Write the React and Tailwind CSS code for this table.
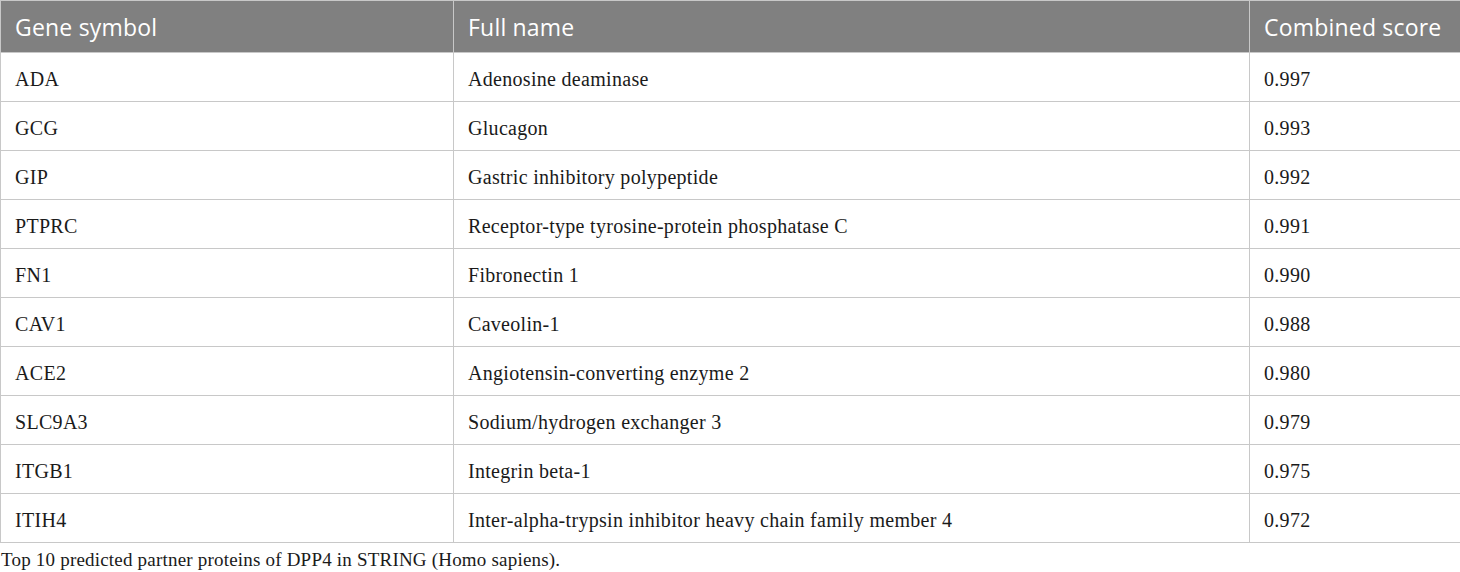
export default function App() {
  const rows = [
    ["ADA", "Adenosine deaminase", "0.997"],
    ["GCG", "Glucagon", "0.993"],
    ["GIP", "Gastric inhibitory polypeptide", "0.992"],
    ["PTPRC", "Receptor-type tyrosine-protein phosphatase C", "0.991"],
    ["FN1", "Fibronectin 1", "0.990"],
    ["CAV1", "Caveolin-1", "0.988"],
    ["ACE2", "Angiotensin-converting enzyme 2", "0.980"],
    ["SLC9A3", "Sodium/hydrogen exchanger 3", "0.979"],
    ["ITGB1", "Integrin beta-1", "0.975"],
    ["ITIH4", "Inter-alpha-trypsin inhibitor heavy chain family member 4", "0.972"],
  ];
  return (
    <div className="w-[1460px] h-[572px] bg-white overflow-hidden">
      <table className="w-[1460px] border-collapse table-fixed">
        <colgroup>
          <col className="w-[453px]" />
          <col className="w-[796px]" />
          <col className="w-[211px]" />
        </colgroup>
        <thead>
          <tr className="bg-[#808080] h-[52px]">
            {["Gene symbol", "Full name", "Combined score"].map((h) => (
              <th
                key={h}
                className="border border-[#c8c8c8] px-[14px] pt-[2px] text-left font-normal text-white text-[23px] tracking-[0.2px] leading-none align-middle"
                style={{ fontFamily: '"Open Sans", sans-serif' }}
              >
                {h}
              </th>
            ))}
          </tr>
        </thead>
        <tbody>
          {rows.map((r) => (
            <tr key={r[0]} className="h-[49px]">
              {r.map((c, i) => (
                <td
                  key={i}
                  className="border border-[#c8c8c8] px-[14px] pt-[3px] text-left text-[20px] tracking-[0.3px] text-[#1a1a1a] leading-none align-middle"
                  style={{ fontFamily: '"Liberation Serif", serif' }}
                >
                  {c}
                </td>
              ))}
            </tr>
          ))}
        </tbody>
      </table>
      <p
        className="mt-[7px] pl-[1px] text-[19px] tracking-[0.2px] text-[#1a1a1a] leading-none"
        style={{ fontFamily: '"Liberation Serif", serif' }}
      >
        Top 10 predicted partner proteins of DPP4 in STRING (Homo sapiens).
      </p>
    </div>
  );
}
